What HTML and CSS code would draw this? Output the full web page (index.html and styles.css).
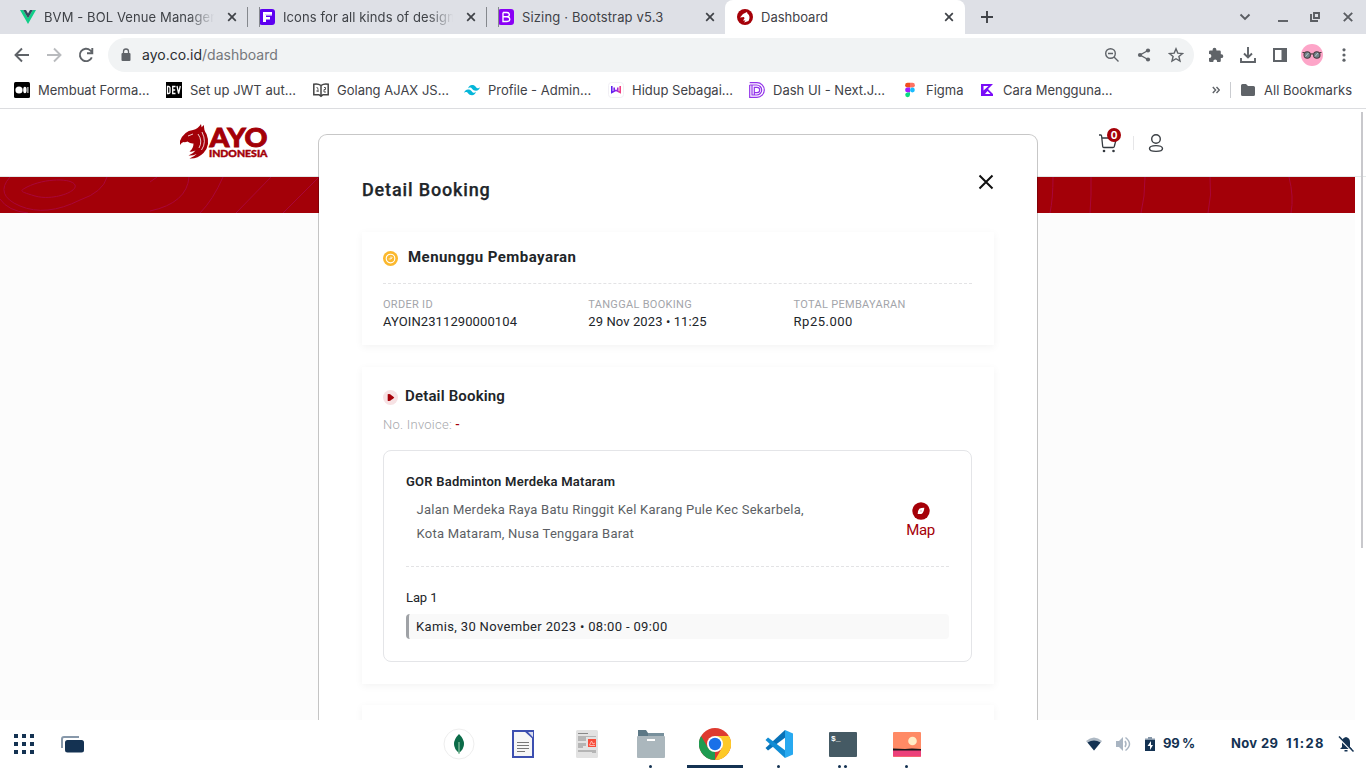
FILE: index.html
```html
<!DOCTYPE html>
<html lang="id">
<head>
<meta charset="utf-8">
<title>Dashboard</title>
<link rel="stylesheet" href="styles.css">
</head>
<body>
<div class="screen">
  <div class="tabs">
    <div class="tab">
      <svg class="ic16" viewBox="0 0 16 16"><path d="M0 1h3.2L8 9.3 12.8 1H16L8 15z" fill="#10ce88"/><path d="M3.2 1H6l2 3.4L10 1h2.8L8 9.3z" fill="#35495e"/></svg>
      <span class="tab-title fade t1">BVM - BOL Venue Manager</span>
      <svg class="x" viewBox="0 0 10 10"><path d="M1.2 1.2l7.6 7.6M8.8 1.2L1.2 8.8"/></svg>
    </div>
    <div class="tab sep">
      <svg class="ic16" viewBox="0 0 16 16"><rect width="16" height="16" rx="3" fill="#5d00f0"/><path d="M4 3h9v3.500H7V8h4v2.500H7V13H4z" fill="#fff"/><path d="M6 5.500h7" stroke="#c9b2fa" stroke-width=".6"/></svg>
      <span class="tab-title fade t2">Icons for all kinds of design</span>
      <svg class="x" viewBox="0 0 10 10"><path d="M1.2 1.2l7.6 7.6M8.8 1.2L1.2 8.8"/></svg>
    </div>
    <div class="tab sep">
      <svg class="ic16" viewBox="0 0 16 16"><rect width="16" height="16" rx="3" fill="#8a00f5"/><path d="M5 3.5h4q2.4.2 2.4 2.2T9 7.8H5M9 7.8q2.8.2 2.8 2.4T9 12.5H5v-9" fill="none" stroke="#fff" stroke-width="1.4"/></svg>
      <span class="tab-title t3">Sizing · Bootstrap v5.3</span>
      <svg class="x" viewBox="0 0 10 10"><path d="M1.2 1.2l7.6 7.6M8.8 1.2L1.2 8.8"/></svg>
    </div>
    <div class="tab active">
      <svg class="ic16" viewBox="0 0 16 16"><circle cx="8" cy="8" r="8" fill="#a50008"/><path d="M3 8.5L6 5l4-2 .4 1.6C13 6 13 10 11.500 12L7 13.500l1.500-2L6 11.500 7.500 9.500 7 8z" fill="#fff"/></svg>
      <span class="tab-title t4">Dashboard</span>
      <svg class="x" viewBox="0 0 10 10"><path d="M1.2 1.2l7.6 7.6M8.8 1.2L1.2 8.8"/></svg>
    </div>
    <svg class="newtab" viewBox="0 0 12 12"><path d="M6 0v12M0 6h12"/></svg>
    <div class="winbtns">
      <svg viewBox="0 0 16 16"><path d="M3.500 5.500L8 10l4.500-4.500"/></svg>
      <svg viewBox="0 0 16 16"><path d="M3 12h10"/></svg>
      <svg viewBox="0 0 16 16"><path d="M7 4h5v5H7zM4 5v7h7"/></svg>
      <svg viewBox="0 0 16 16"><path d="M3.800 3.800l8.400 8.400M12.200 3.800l-8.400 8.400"/></svg>
    </div>
  </div>

  <div class="toolbar">
    <svg class="nav" viewBox="0 0 16 16"><path d="M15 8H2M8 1.500L1.500 8 8 14.500"/></svg>
    <svg class="nav dim" viewBox="0 0 16 16"><path d="M1 8h13M8 1.500L14.500 8 8 14.500"/></svg>
    <svg class="nav" viewBox="0 0 16 16"><path d="M13.800 10.300A6.200 6.200 0 1 1 12.300 3.400L14 5M14.300 1v5.300H9"/></svg>
    <div class="omnibox">
      <svg class="lock" viewBox="0 0 12 16"><rect x="1.500" y="6" width="9" height="8" rx="1" fill="#5f6368"/><path d="M3.500 6V4.500a2.500 2.500 0 0 1 5 0V6" fill="none" stroke="#5f6368" stroke-width="1.300"/></svg>
      <span class="url"><b>ayo.co.id</b>/dashboard</span>
      <div class="omni-actions">
        <svg viewBox="0 0 16 16"><circle cx="6.500" cy="6.500" r="4.800"/><path d="M10 10l4.500 4.500M4 6.500h5"/></svg>
        <svg viewBox="0 0 16 16"><path d="M12 3.500L4 8l8 4.500"/><g fill="#5f6368" stroke="none"><circle cx="12" cy="3.500" r="2.100"/><circle cx="4" cy="8" r="2.100"/><circle cx="12" cy="12.500" r="2.100"/></g></svg>
        <svg viewBox="0 0 16 16"><path d="M8 1.800l1.800 4.300 4.700.4-3.600 3 1.100 4.600L8 11.700l-4 2.400 1.100-4.600-3.600-3 4.700-.4z"/></svg>
      </div>
    </div>
    <div class="tool-actions">
      <svg viewBox="0 0 16 16"><path d="M6.500 .8a1.900 1.900 0 0 1 1.900 1.900v.8h3.200a1.200 1.200 0 0 1 1.200 1.200v2.600h.6a1.900 1.900 0 0 1 0 3.800h-.6v2.700a1.200 1.200 0 0 1-1.200 1.200H9.100v-.6a1.900 1.900 0 0 0-3.800 0v.6H2.200A1.200 1.200 0 0 1 1 13.800v-2.900h.5a1.900 1.900 0 0 0 0-3.800H1V4.700a1.200 1.200 0 0 1 1.200-1.200h2.400v-.8A1.900 1.900 0 0 1 6.500 .8z" fill="#5f6368"/></svg>
      <svg viewBox="0 0 16 16"><path d="M8 0v10M4 6.500l4 4 4-4M1 11v4h14v-4" fill="none" stroke="#5f6368" stroke-width="1.900"/></svg>
      <svg viewBox="0 0 16 16"><path d="M2 2h12v12H2z" fill="none" stroke="#5f6368" stroke-width="2"/><path d="M9.500 1H15v14H9.500z" fill="#5f6368"/></svg>
      <svg class="avatar" viewBox="0 0 22 22"><circle cx="11" cy="11" r="11" fill="#fda5c8"/><g fill="#71848b" stroke="#4a3d40" stroke-width="1.100"><circle cx="6.200" cy="11" r="3.200"/><circle cx="15.800" cy="11" r="3.200"/><path d="M9.500 10.200q1.500-.8 3 0M1.500 8.500h2M18.500 8.500h2"/></g><path d="M4.500 12.500l3-3.500M14 12.500l3-3.500" stroke="#bccacb"/></svg>
      <svg class="more" viewBox="0 0 16 16"><g fill="#5f6368"><circle cx="8" cy="2.800" r="1.600"/><circle cx="8" cy="8" r="1.600"/><circle cx="8" cy="13.200" r="1.600"/></g></svg>
    </div>
  </div>

  <div class="bookmarks">
    <div class="bm"><svg class="ic16" viewBox="0 0 16 16"><rect width="16" height="16" rx="1.500"/><g fill="#fff"><circle cx="5" cy="8" r="3.600"/><ellipse cx="10.900" cy="8" rx="1.700" ry="3.300"/><rect x="13.400" y="5" width="1" height="6"/></g></svg><span>Membuat Forma...</span></div>
    <div class="bm"><svg class="ic16" viewBox="0 0 16 16"><rect width="16" height="16"/><path d="M1.500 4.500v7h1q1.500 0 1.500-1.500V6q0-1.500-1.500-1.500zM9.500 4.500H6.700v7h2.800M6.700 8h2.500M11 4l1.600 7.500L14.300 4" fill="none" stroke="#fff" stroke-width="1.300"/></svg><span>Set up JWT aut...</span></div>
    <div class="bm"><svg class="ic16" viewBox="0 0 16 16"><path d="M.8 2.200Q5 1.300 8 3.500q3-2.200 7.200-1.300v10.500H10L8 14.300l-2-1.600H.8zM8 3.500v10.300" fill="none" stroke="#444" stroke-width="1.500"/><path d="M3.500 5.500q1.500-.5 1.500 2v2.500M3.300 9h2M11 5.500h1.500v2H11v2.500h2" fill="none" stroke="#555"/></svg><span>Golang AJAX JS...</span></div>
    <div class="bm"><svg class="ic16" viewBox="0 0 16 16"><path d="M4 6.500Q5 3 8 3c4 0 3.500 2.800 5.500 3.200Q15 6.500 16 5q-1 3.800-4 3.800c-4 0-3.500-2.800-5.500-3.200Q5 5.300 4 6.500zM0 11q1-3.500 4-3.500c4 0 3.500 2.800 5.500 3.200Q11 11 12 9.500q-1 3.800-4 3.800c-4 0-3.500-2.800-5.500-3.200Q1 9.800 0 11z" fill="#06b6d9"/></svg><span>Profile - Admin...</span></div>
    <div class="bm"><svg class="ic16" viewBox="0 0 16 16"><defs><linearGradient id="wg"><stop stop-color="#5b20ef"/><stop offset=".6" stop-color="#9b24e8"/><stop offset="1" stop-color="#f04080"/></linearGradient></defs><rect x=".5" y=".5" width="15" height="15" rx="3" fill="#fff" stroke="#f1eff4"/><path d="M3.800 4v6.500L8 8.300l4.200 2.200V4M6.200 5.500v4M9.800 5.500v4" fill="none" stroke="url(#wg)" stroke-width="1.600"/></svg><span>Hidup Sebagai...</span></div>
    <div class="bm"><svg class="ic16" viewBox="0 0 16 16"><path d="M.7 .7H8a7.300 7.300 0 0 1 0 14.600H.7v-3M.7 3h7a5 5 0 0 1 0 10H3V3M5.300 13V5.300H8a2.700 2.700 0 0 1 0 5.400H5.300M.7 3v10" fill="none" stroke="#9333ea" stroke-width="1.200"/></svg><span>Dash UI - Next.J...</span></div>
    <div class="bm"><svg class="ic16" viewBox="0 0 16 16"><path d="M8 .8H5.500a2.400 2.400 0 0 0 0 4.800H8z" fill="#f24e1e"/><path d="M8 .8h2.500a2.400 2.400 0 0 1 0 4.800H8z" fill="#ff7262"/><path d="M8 5.600H5.500a2.400 2.400 0 0 0 0 4.800H8z" fill="#a020ff"/><circle cx="10.400" cy="8" r="2.400" fill="#1abcfe"/><path d="M8 10.400H5.500A2.400 2.400 0 1 0 8 12.800z" fill="#0bdc80"/></svg><span>Figma</span></div>
    <div class="bm"><svg class="ic16" viewBox="0 0 16 16"><path d="M2 2h12L9 7l5 5v2H2z" fill="#7a0cf8"/><path d="M4.500 4h5L4.500 8.500zM6 12l2.500-3 3 3" fill="#fff"/></svg><span>Cara Mengguna...</span></div>
    <div class="bm-right">
      <svg class="chev" viewBox="0 0 8 8"><path d="M.8 1l2.800 3L.8 7M4.500 1l2.800 3-2.800 3"/></svg>
      <span class="vr"></span>
      <svg class="folder" viewBox="0 0 14 12"><path d="M1.500 0H5l2 2h5.500A1.500 1.500 0 0 1 14 3.500v7a1.500 1.500 0 0 1-1.500 1.500h-11A1.500 1.500 0 0 1 0 10.500v-9A1.500 1.500 0 0 1 1.500 0z" fill="#5f6368"/></svg>
      <span>All Bookmarks</span>
    </div>
  </div>

  <main class="viewport">
    <header class="site-header">
      <svg class="logo" viewBox="0 0 92 38">
        <path d="M2 18Q6 8 15 7q5-1 8-6l.6 3.300L26 2q-.4 5 2.500 9 4.500 11-3 19-6 6-14 5.500 5-2 7-4.500-4 2-8 1.500 5-2 7-5-3 1.600-6 1 4-3 4-8-3 .5-6-2-2 1-4 .6-2 .4-3.500 3z" fill="#a30008"/>
        <path d="M20 11q5 7 1 14M24 9q5 10-.5 18M10 13l5-2" fill="none" stroke="#fff" stroke-width=".8"/>
        <text x="31.500" y="24.200" class="logo-a" textLength="58" lengthAdjust="spacingAndGlyphs">AYO</text>
        <text x="31" y="34" class="logo-b" textLength="58.500" lengthAdjust="spacingAndGlyphs">INDONESIA</text>
      </svg>
      <div class="account">
        <div class="cart">
          <svg viewBox="0 0 20 20"><path d="M1 2h1.800q.7 0 .8 1l1.100 10.500q.1 1 1 1H15q1 0 1.300-1L18.500 5H4.200" fill="none" stroke="#343a40" stroke-width="1.300"/><circle cx="6" cy="18" r="1.300" fill="#343a40"/><circle cx="15.500" cy="18" r="1.300" fill="#343a40"/></svg>
          <span class="badge">0</span>
        </div>
        <span class="split"></span>
        <svg class="user" viewBox="0 0 16 20"><circle cx="8" cy="6" r="4.300"/><ellipse cx="8" cy="15.500" rx="6.500" ry="2.900"/></svg>
      </div>
    </header>
    <svg class="band" viewBox="0 0 1355 36" preserveAspectRatio="none"><path d="M27 10C45 1 72 1 75 8S52 24 35 19 20 14 27 10zM10 0Q-6 18 20 29t60-6Q103 15 107 0M0 22q8 12 28 14M150 34q37-8 39-34M223 0q-10 23-23 36M271 0L236 36M319 0L283 36M157 0l-7 5M1053 0q0 22-3 36M1091 0v18l-1 18M1145 0q0 20-4 36M1210 0q2 18-2 36M1289 0q5 20 2 36" fill="none" stroke="#a9063a" stroke-width="1"/></svg>

    <section class="modal">
      <div class="modal-head">
        <h1>Detail Booking</h1>
        <svg class="close" viewBox="0 0 16 16"><path d="M1.500 1.500l13 13M14.500 1.500l-13 13"/></svg>
      </div>
      <div class="card status">
        <div class="card-title wait"><svg class="ic15" viewBox="0 0 16 16"><circle cx="8" cy="8" r="8" fill="#fbb82d"/><circle cx="8" cy="8" r="4.600" fill="none" stroke="#fff" stroke-width="1.200"/><path d="M8.500 5.800V8.500H6M10 6.500L8.500 8.500" fill="none" stroke="#fff" stroke-width=".8"/></svg><h2>Menunggu Pembayaran</h2></div>
        <div class="facts">
          <div><small>ORDER ID</small><p>AYOIN2311290000104</p></div>
          <div><small>TANGGAL BOOKING</small><p>29 Nov 2023 • 11:25</p></div>
          <div><small>TOTAL PEMBAYARAN</small><p class="total">Rp25.000</p></div>
        </div>
      </div>
      <div class="card detail">
        <div class="card-title"><svg class="ic15" viewBox="0 0 16 16"><circle cx="8" cy="8" r="8" fill="#f7e2e4"/><path d="M5 4.500q2-1 4 1 2 1.200 3 2.500-1 1.300-3 2.500-2 2-4 1z" fill="#a50008"/></svg><h2>Detail Booking</h2></div>
        <p class="invoice">No. Invoice: <b>-</b></p>
        <div class="venue">
          <h3>GOR Badminton Merdeka Mataram</h3>
          <div class="place">
            <p class="address">Jalan Merdeka Raya Batu Ringgit Kel Karang Pule Kec Sekarbela,<br>Kota Mataram, Nusa Tenggara Barat</p>
            <div class="map"><svg viewBox="0 0 18 18"><circle cx="9" cy="9" r="8.700" fill="#a50008"/><path d="M12.300 5.700q-.3 5-3 6.300H5.700q0-3.500 1.600-5.200Q9 5.700 12.300 5.700z" fill="#fff"/><circle cx="9" cy="9" r=".7" fill="#d78b8f"/></svg><span>Map</span></div>
          </div>
          <p class="court">Lap 1</p>
          <p class="slot">Kamis, 30 November 2023 • 08:00 - 09:00</p>
        </div>
      </div>
      <div class="card next"></div>
    </section>
    <span class="thumb"></span>
  </main>

  <footer class="shelf">
    <div class="left">
      <svg width="20" height="20" viewBox="0 0 20 20"><path d="M0 0h4v4H0zM8 0h4v4H8zM16 0h4v4h-4zM0 8h4v4H0zM8 8h4v4H8zM16 8h4v4h-4zM0 16h4v4H0zM8 16h4v4H8zM16 16h4v4h-4z" fill="#143252"/></svg>
      <svg width="23" height="17" viewBox="0 0 23 17"><path d="M1 12V3q0-2 2-2h15" fill="none" stroke="#8798aa" stroke-width="2"/><rect x="4" y="4" width="19" height="12.500" rx="2.500" fill="#143252"/></svg>
    </div>
    <div class="apps">
      <div class="app"><svg viewBox="0 0 32 32"><circle cx="16" cy="16" r="15" fill="#fff" stroke="#eee"/><path d="M16 6q5 5 5 10t-5 9q-5-4-5-9t5-10z" fill="#0b6b48"/><path d="M16 14v12" stroke="#83bd9b" stroke-width="1.300"/></svg></div>
      <div class="app"><svg viewBox="0 0 32 32"><path d="M6 3h20v26H6z" fill="#f6f6f6" stroke="#3c4fb0" stroke-width="2"/><path d="M17 3h10v9z" fill="#3c4fb0"/><path d="M21 4h5v5.200z" fill="#fff" opacity=".8"/><path d="M10 14.500h12M10 17.500h12M10 20.500h12M10 23.500h8" stroke="#777"/></svg></div>
      <div class="app"><svg viewBox="0 0 32 32"><rect x="5" y="2" width="22" height="28" rx="1.500" fill="#e2e2e2"/><path d="M7 5.500h10" stroke="#888"/><path d="M7 8h18v1H15v4H7zM7 15h8v3h-3v2H7zM7 22h18v3h-4v-1H7z" fill="#b5b5b5"/><rect x="17" y="11" width="8" height="8" fill="#f74c3a"/><path d="M18.500 17l2-4 1.500 3 2-1M18.500 17.500h5.500" stroke="#ffd0c8" stroke-width=".8" fill="none"/></svg></div>
      <div class="app dot"><svg viewBox="0 0 32 32"><path d="M3 2h8l2 3h12v7H3z" fill="#5c7886"/><path d="M13 5h16v5H13z" fill="#78909c"/><rect x="2" y="8" width="28" height="22" rx="1" fill="#abb7bd"/><rect x="12" y="11" width="8" height="2" fill="#fff"/></svg></div>
      <div class="app active-app"><svg viewBox="0 0 32 32"><circle cx="16" cy="16" r="16" fill="#de3a2f"/><path d="M2.100 8L9.100 20 16 24v8A16 16 0 0 1 2.100 8z" fill="#1e9b50"/><path d="M16 8h13.900A16 16 0 0 1 16 32l6.900-12z" fill="#fdc928"/><circle cx="16" cy="16" r="8" fill="#fff"/><circle cx="16" cy="16" r="6.200" fill="#1a70e8"/></svg></div>
      <div class="app dot"><svg viewBox="0 0 32 32"><path d="M2.500 20L22 2l1 7L5 22.500z" fill="#0872b8"/><path d="M2.500 12L5 9.500 23 23l-1 7z" fill="#108cd4"/><path d="M22 2l8 3.500v21L22 30z" fill="#28a9f0"/></svg></div>
      <div class="app dots"><svg viewBox="0 0 32 32"><rect x="2" y="4" width="28" height="25" rx="1" fill="#455a64"/><text x="4" y="13" class="prompt">$_</text></svg></div>
      <div class="app dot"><svg viewBox="0 0 32 32"><rect x="2" y="4" width="28" height="25" rx="1" fill="#ff8a65"/><path d="M2 22h28v6.500H2z" fill="#ec407a"/><path d="M2 20.500l12 .5 7-.5 9 .5v1.500H2z" fill="#17151a"/><circle cx="21.500" cy="13" r="4.300" fill="#ffecc7"/></svg></div>
    </div>
    <div class="tray">
      <svg class="wifi" width="16" height="14" viewBox="0 0 16 14"><path d="M0 4q8-7 16 0l-8 9.500z" fill="#aeb9c4"/><path d="M1.500 5.500q6.500-4 13 0l-6.500 8z" fill="#143252"/></svg>
      <svg class="vol" width="16" height="16" viewBox="0 0 16 16"><path d="M1 5h3l4-4v14l-4-4H1z" fill="#a9b5c2"/><path d="M10 5q2 3 0 6M10.500 1.500q8 6.500 0 13" fill="none" stroke="#a9b5c2" stroke-width="1.500"/></svg>
      <svg class="batt" width="10" height="14" viewBox="0 0 10 14"><path d="M3 0h4v1.500h3V3H0V1.500h3z" fill="#8798aa"/><path d="M0 3h10v11H0z" fill="#143252"/><path d="M6 4L2.500 9H5v4l3-5H6z" fill="#fff"/></svg>
      <span class="pct">99 %</span><span class="date">Nov 29</span><span class="time">11:28</span>
      <svg class="bell" width="16" height="16" viewBox="0 0 16 16"><path d="M8 1q4 1 4 5v5l2 2H2l2-2V6q0-4 4-5zM6.500 14h3v1.500h-3z" fill="#143252"/><path d="M0 1l15 15" stroke="#fff" stroke-width="2"/><path d="M1 .5l14.500 15" stroke="#143252" stroke-width="1.500"/></svg>
    </div>
  </footer>
</div>
</body>
</html>
```
FILE: styles.css
```css
* { box-sizing: border-box; }
body { margin: 0; font-family: Inter, "Liberation Sans", sans-serif; color: #3f4247; }
svg { display: block; flex: none; }
h1, h2, h3, p { margin: 0; }
.screen { width: 1366px; height: 768px; display: flex; flex-direction: column; overflow: hidden; background: #fff; }
.ic16 { width: 16px; height: 16px; }

/* Tab strip */
.tabs { height: 34px; flex: none; display: flex; align-items: center; background: #dee0e6; padding-left: 8px; font-size: 13px; }
.tab { width: 239px; height: 34px; display: flex; align-items: center; padding: 0 10px 0 12px; gap: 8px; position: relative; }
.tab.active { width: 240px; background: #fff; border-radius: 8px 8px 0 0; padding-right: 11px; }
.sep::before, .sep::after { content: ""; position: absolute; top: 7px; width: 1px; height: 20px; background: #85888d; }
.sep::before { left: 0; }
.tab-title { flex: 1; white-space: nowrap; overflow: hidden; line-height: 20px; letter-spacing: .15px; }
.fade { -webkit-mask-image: linear-gradient(90deg, #000 84%, transparent 99%); mask-image: linear-gradient(90deg, #000 84%, transparent 99%); }
.t1, .t2 { flex: none; width: 172px; margin-right: 3px; letter-spacing: .1px; }
.t4 { letter-spacing: 0; }
.x { width: 10px; height: 10px; fill: none; stroke: #3f4247; stroke-width: 1.700; }
.newtab { width: 12px; height: 12px; margin-left: 16px; fill: none; stroke: #3f4247; stroke-width: 1.900; }
.winbtns { margin-left: auto; display: grid; grid-template-columns: 38px 32px 33px 26px; }
.winbtns svg { width: 16px; height: 16px; fill: none; stroke: #5a5d62; stroke-width: 1.900; }

/* Toolbar */
.toolbar { height: 42px; flex: none; display: flex; align-items: center; padding-left: 14px; }
.nav { width: 16px; height: 16px; margin-right: 16px; fill: none; stroke: #5f6368; stroke-width: 1.900; }
.nav + .nav + .nav { margin-right: 14px; }
.dim { stroke: #b9bbbe; }
.omnibox { width: 1086px; height: 34px; border-radius: 17px; background: #f1f3f4; display: flex; align-items: center; padding: 0 10px 0 12px; }
.lock { width: 12px; height: 16px; }
.url { margin: -2px 0 0 10px; font-size: 14px; color: #75787c; }
.url b { font-weight: 400; color: #2b2d30; }
.omni-actions { display: flex; gap: 16px; margin-left: auto; }
.omni-actions svg { width: 16px; height: 16px; fill: none; stroke: #5f6368; stroke-width: 1.400; }
.tool-actions { display: flex; align-items: center; gap: 16px; margin-left: 14px; }
.tool-actions svg { width: 16px; height: 16px; }
.tool-actions .avatar { width: 22px; height: 22px; margin: 0 -3px; }

/* Bookmarks */
.bookmarks { height: 33px; flex: none; display: grid; grid-template-columns: 152px 147px 151px 144px 141px 153px 77px 160px 1fr; align-items: start; padding: 5px 14px 0; border-bottom: 1px solid #dcdde0; font-size: 13px; white-space: nowrap; }
.bm { display: flex; align-items: center; gap: 8px; height: 18px; }
.bm-right { display: flex; align-items: center; justify-content: flex-end; height: 18px; gap: 9px; }
.chev { width: 8px; height: 8px; fill: none; stroke: #5f6368; stroke-width: 1.400; margin-right: 1px; }
.vr { width: 1px; height: 16px; background: #caccd0; margin-right: 1px; }
.folder { width: 14px; height: 12px; }

/* Page */
.viewport { height: 611px; flex: none; position: relative; overflow: hidden; background: linear-gradient(90deg, #fcfcfc 1355px, #fff 1355px); font-family: Roboto, "Noto Sans", sans-serif; }
.site-header { height: 68px; background: #fff; border-bottom: 1px solid #e3e8e8; display: flex; justify-content: space-between; padding: 14px 202px 0 178px; }
.logo { width: 92px; height: 38px; }
.logo-a { font: 900 26px Lato, sans-serif; fill: #a30008; stroke: #a30008; stroke-width: .9px; }
.logo-b { font: 900 9.500px Lato, sans-serif; fill: #a30008; stroke: #a30008; stroke-width: .4px; }
.account { display: flex; align-items: center; height: 40px; }
.cart { position: relative; width: 20px; height: 20px; }
.cart svg { width: 20px; height: 20px; }
.badge { position: absolute; left: 9px; top: -5px; width: 14px; height: 14px; border-radius: 7px; background: #a50008; color: #fff; font: 700 10px/14px Inter, sans-serif; text-align: center; }
.split { width: 1px; height: 14px; background: #e6e6e8; margin: 0 14px 0 15px; }
.user { width: 16px; height: 20px; fill: none; stroke: #3a3f44; stroke-width: 1.400; }
.band { width: 1355px; height: 36px; background: #a30008; }
.thumb { position: absolute; left: 1361px; top: 3px; width: 2px; height: 436px; background: #c8c8cc; }

.modal { position: absolute; left: 318px; top: 25px; width: 720px; height: 700px; background: #fff; background-clip: padding-box; border: 1px solid rgba(0,0,0,.22); border-radius: 9px; padding: 0 43.500px 0 42.500px; color: #212529; }
.modal-head { display: flex; justify-content: space-between; height: 97px; padding-top: 39px; }
.modal-head h1 { font-size: 18px; line-height: 30px; font-weight: 500; letter-spacing: .85px; padding-top: 1px; margin-left: .5px; -webkit-text-stroke: .25px; }
.close { width: 16px; height: 16px; fill: none; stroke: #111; stroke-width: 2; }
.card { background: #fff; padding: 0 21.500px; box-shadow: 0 2px 8px rgba(0,0,0,.05); }
.status { height: 113px; margin-bottom: 22px; }
.card-title { display: flex; align-items: center; gap: 7px; }
.card-title h2 { font-size: 15px; line-height: 20px; font-weight: 600; letter-spacing: .17px; }
.wait { height: 52px; gap: 10px; border-bottom: 1px dashed #e3e3e5; }
.wait h2 { font-weight: 700; letter-spacing: .45px; margin-top: -2px; }
.ic15 { width: 15px; height: 15px; position: relative; top: 1px; }
.facts { display: grid; grid-template-columns: repeat(3, 205.300px); padding-top: 13px; font-size: 13px; letter-spacing: .1px; }
.facts small { display: block; font-size: 11px; line-height: 16px; color: #a3a5aa; letter-spacing: .3px; }
.facts p { line-height: 18px; white-space: nowrap; }
.facts .total { letter-spacing: .5px; }
.detail { height: 317px; padding-top: 19px; margin-bottom: 21px; }
.invoice { font-size: 13px; font-weight: 300; line-height: 20px; margin-top: 9px; color: #a7a9ad; letter-spacing: .25px; }
.invoice b { color: #a50008; font-weight: 500; }
.venue { height: 212px; margin-top: 15px; border: 1px solid #e4e5e8; border-radius: 8px; padding: 21px 22px; font-size: 13px; }
.venue h3 { font-size: 13px; line-height: 20px; font-weight: 600; letter-spacing: .23px; }
.place { display: flex; justify-content: space-between; height: 75px; padding: 6px 14px 0 10.500px; border-bottom: 1px dashed #e3e3e5; }
.address { line-height: 24px; color: #5c5f65; letter-spacing: .25px; white-space: nowrap; }
.map { display: flex; flex-direction: column; align-items: center; color: #a50008; font-size: 15px; line-height: 20px; padding-top: 4px; letter-spacing: -.3px; }
.map svg { width: 18px; height: 18px; }
.court { line-height: 20px; margin-top: 21px; letter-spacing: -.1px; }
.slot { height: 25px; line-height: 25px; margin-top: 6px; padding-left: 7px; border-left: 3px solid #9fa2a6; border-radius: 4px; background: #f9f9f9; letter-spacing: .35px; }
.next { height: 60px; }

/* Shelf */
.shelf { height: 48px; flex: none; display: grid; grid-template-columns: 427px 512px 1fr; background: #fff; color: #143252; }
.left { display: flex; align-items: center; gap: 27px; padding-left: 14px; }
.apps { display: grid; grid-template-columns: repeat(8, 64px); }
.app { display: flex; flex-direction: column; align-items: center; padding-top: 8px; position: relative; }
.app svg { width: 32px; height: 32px; }
.dot::after, .dots::after { content: ""; position: absolute; left: 30px; top: 45px; width: 3px; height: 3px; border-radius: 50%; background: #143252; }
.dots::after { left: 27px; box-shadow: 6px 0 #143252; }
.active-app::after { content: ""; position: absolute; bottom: 0; width: 56px; height: 3px; background: #143252; }
.prompt { font: 700 8px "Liberation Mono", monospace; fill: #fff; }
.tray { display: flex; align-items: center; font-size: 13px; font-weight: 700; padding-left: 147px; white-space: nowrap; }
.tray span { margin-top: -2px; }
.vol { margin-left: 13px; }
.batt { margin-left: 14px; }
.pct { width: 68px; margin-left: 8px; letter-spacing: -.3px; }
.date { width: 55px; letter-spacing: .35px; }
.time { width: 52px; letter-spacing: 1.300px; }
```
